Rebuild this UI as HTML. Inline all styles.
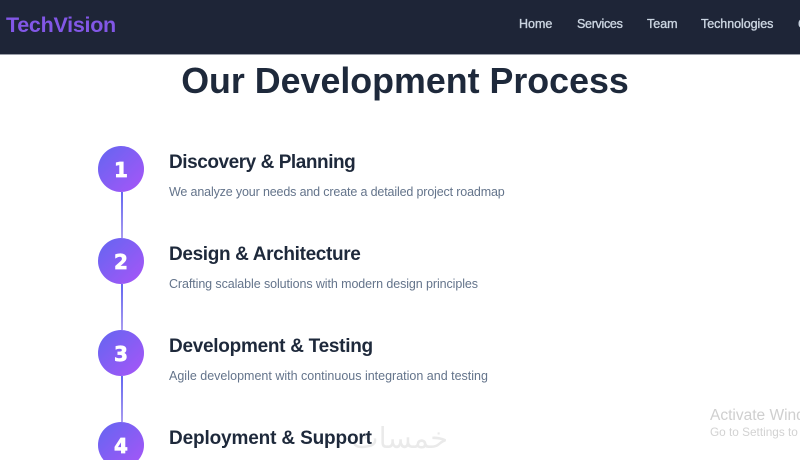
<!DOCTYPE html>
<html>
<head>
<meta charset="utf-8">
<style>
html,body{margin:0;padding:0;background:#fff;overflow:hidden;width:800px;height:460px}
#w{position:absolute;left:0;top:0;width:800px;height:460px;overflow:hidden;font-family:"Liberation Sans","DejaVu Sans",sans-serif}
.a{position:absolute;white-space:nowrap;line-height:1}
#hdr{position:absolute;left:0;top:0;width:800px;height:54px;background:#1e2537;border-bottom:1px solid #9a9ea8}
.nav{color:#cbd5e1;font-size:12.5px;top:18px;-webkit-text-stroke:.35px #cbd5e1}
.c{position:absolute;left:98px;width:46px;height:46px;border-radius:50%;background:linear-gradient(135deg,#6366f1,#a855f7);color:#fff;font-family:"DejaVu Sans",sans-serif;font-weight:bold;font-size:20px;line-height:49px;text-align:center;-webkit-text-stroke:.7px #fff}
.l{position:absolute;left:121px;width:1.5px;height:46px;background:linear-gradient(#6366f1,#a99cf0)}
.t{left:169px;color:#1e293b;font-size:19px;font-weight:bold}
.p{left:169px;color:#64748b;font-size:12.5px}
</style>
</head>
<body>
<div id="w">
<div id="hdr"></div>
<div class="a" style="left:6px;top:15px;font-size:21.5px;font-weight:bold;letter-spacing:-.28px;color:#8257e6">TechVision</div>
<div class="a nav" style="left:519px">Home</div>
<div class="a nav" style="left:577px;letter-spacing:-.3px">Services</div>
<div class="a nav" style="left:647px">Team</div>
<div class="a nav" style="left:701px;letter-spacing:-.05px">Technologies</div>
<div class="a nav" style="left:798px;width:2px;overflow:hidden">C</div>

<div class="a" style="left:0;width:810px;text-align:center;top:64px;font-size:35.8px;font-weight:bold;color:#1e293b">Our Development Process</div>

<div class="l" style="top:192px"></div>
<div class="l" style="top:284px"></div>
<div class="l" style="top:376px"></div>
<div class="c" style="top:146px">1</div>
<div class="c" style="top:238px">2</div>
<div class="c" style="top:330px">3</div>
<div class="c" style="top:422px">4</div>

<div class="a t" style="top:153px;letter-spacing:-.45px">Discovery &amp; Planning</div>
<div class="a p" style="top:186px;letter-spacing:-.15px">We analyze your needs and create a detailed project roadmap</div>
<div class="a t" style="top:245px;letter-spacing:-.35px">Design &amp; Architecture</div>
<div class="a p" style="top:278px;letter-spacing:-.09px">Crafting scalable solutions with modern design principles</div>
<div class="a t" style="top:337px;letter-spacing:-.28px">Development &amp; Testing</div>
<div class="a p" style="top:370px">Agile development with continuous integration and testing</div>
<div class="a t" style="top:429px;letter-spacing:-.15px">Deployment &amp; Support</div>

<div class="a" style="left:352px;top:424px;width:96px;height:34px;overflow:hidden;text-align:center;font-size:29px;color:#000;opacity:.08;font-family:'DejaVu Sans',sans-serif" dir="rtl">خمسات</div>
<div class="a" style="left:710px;top:408px;width:90px;overflow:hidden;font-size:15.5px;color:#cfcfcf">Activate Windows</div>
<div class="a" style="left:710px;top:427px;width:90px;overflow:hidden;font-size:11.8px;color:#d2d2d2">Go to Settings to activate Windows.</div>
</div>
</body>
</html>
